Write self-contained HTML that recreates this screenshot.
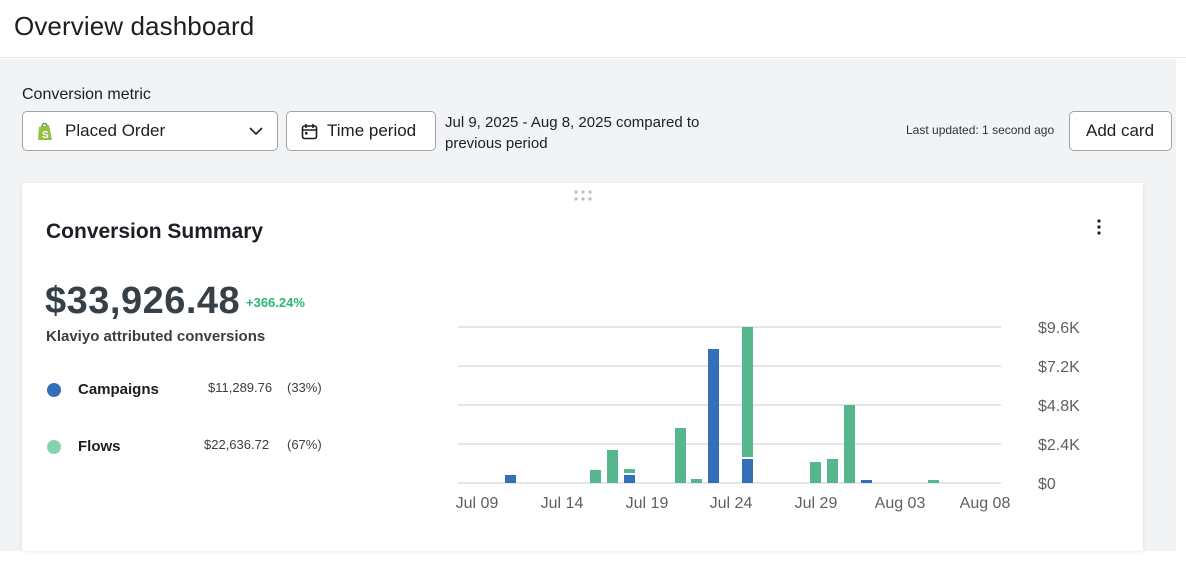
<!DOCTYPE html>
<html><head><meta charset="utf-8"><style>
*{box-sizing:border-box;margin:0;padding:0}
body{width:1186px;height:570px;background:#fff;font-family:"Liberation Sans",sans-serif;color:#1b1f23;position:relative;overflow:hidden}
.hdr{position:absolute;left:0;top:0;width:1186px;height:58px;background:#fff;border-bottom:1px solid #e6e7e9}
.hdr h1{position:absolute;left:14px;top:11px;font-size:26px;font-weight:400;color:#1b1f23;letter-spacing:0.1px}
.gray{position:absolute;left:0;top:59px;width:1176px;height:492px;background:#f2f3f4}
.lbl{position:absolute;left:22px;top:86px;font-size:16px;color:#1b1f23}
.btn{position:absolute;background:#fff;border:1px solid #9fa4a9;border-radius:5px;font-size:17px;color:#1b1f23}
.card{position:absolute;left:22px;top:183px;width:1121px;height:368px;background:#fff;box-shadow:0 1px 4px rgba(0,0,0,.08)}
.t{position:absolute;white-space:nowrap}
</style></head><body>
<div class="hdr"><h1>Overview dashboard</h1></div>
<div class="gray"></div>
<div class="lbl">Conversion metric</div>
<div class="btn" style="left:22px;top:111px;width:256px;height:40px">
 <svg style="position:absolute;left:14px;top:10px" width="16" height="19" viewBox="0 0 16 19"><path d="M2 5 L12 3 L15 18 L1 18 Z" fill="#95bf47"/><path d="M5 5 C5 1 9 0 10 4" stroke="#5e8e3e" stroke-width="1.3" fill="none"/><text x="5" y="16" font-size="10" font-weight="bold" fill="#fff" font-family="Liberation Sans">S</text></svg>
 <span class="t" style="left:42px;top:9px">Placed Order</span>
 <svg style="position:absolute;left:226px;top:14px" width="14" height="10" viewBox="0 0 14 10"><path d="M1 2 L7 8 L13 2" stroke="#1b1f23" stroke-width="1.6" fill="none"/></svg>
</div>
<div class="btn" style="left:286px;top:111px;width:150px;height:40px">
 <svg style="position:absolute;left:14px;top:11px" width="17" height="17" viewBox="0 0 17 17"><rect x="1.5" y="3" width="14" height="12.5" rx="2" stroke="#1b1f23" stroke-width="1.6" fill="none"/><path d="M5 1v4M12 1v4M1.5 7h14" stroke="#1b1f23" stroke-width="1.6"/><rect x="4" y="9" width="2.5" height="2.5" fill="#1b1f23"/></svg>
 <span class="t" style="left:40px;top:9px">Time period</span>
</div>
<div class="t" style="left:445px;top:112px;font-size:15px;line-height:21px">Jul 9, 2025 - Aug 8, 2025 compared to<br>previous period</div>
<div class="t" style="left:906px;top:123px;font-size:12px;color:#2d3338">Last updated: 1 second ago</div>
<div class="btn" style="left:1069px;top:111px;width:103px;height:40px"><span class="t" style="left:16px;top:9px">Add card</span></div>

<div class="card">
 <svg style="position:absolute;left:552px;top:7px" width="18" height="12"><g fill="#b9bdc1"><circle cx="2" cy="2" r="1.6"/><circle cx="9" cy="2" r="1.6"/><circle cx="16" cy="2" r="1.6"/><circle cx="2" cy="9" r="1.6"/><circle cx="9" cy="9" r="1.6"/><circle cx="16" cy="9" r="1.6"/></g></svg>
 <svg style="position:absolute;left:1074px;top:36px" width="6" height="16"><g fill="#1b1f23"><circle cx="3" cy="2" r="1.6"/><circle cx="3" cy="8" r="1.6"/><circle cx="3" cy="14" r="1.6"/></g></svg>
 <div class="t" style="left:24px;top:37px;font-size:21px;font-weight:700;color:#1b1f23">Conversion Summary</div>
 <div class="t" style="left:23px;top:97px;font-size:38px;font-weight:700;color:#373f47;letter-spacing:0.5px">$33,926.48</div>
 <div class="t" style="left:224px;top:112px;font-size:13px;font-weight:700;color:#2bb673">+366.24%</div>
 <div class="t" style="left:24px;top:145px;font-size:15px;font-weight:700;color:#373f47">Klaviyo attributed conversions</div>
 <div style="position:absolute;left:25px;top:200px;width:14px;height:14px;border-radius:50%;background:#3470b8"></div>
 <div class="t" style="left:56px;top:198px;font-size:15px;font-weight:700">Campaigns</div>
 <div class="t" style="left:186px;top:197px;font-size:13px;color:#373f47">$11,289.76</div>
 <div class="t" style="left:265px;top:197px;font-size:13px;color:#373f47">(33%)</div>
 <div style="position:absolute;left:25px;top:257px;width:14px;height:14px;border-radius:50%;background:#86d1b0"></div>
 <div class="t" style="left:56px;top:255px;font-size:15px;font-weight:700">Flows</div>
 <div class="t" style="left:182px;top:254px;font-size:13px;color:#373f47">$22,636.72</div>
 <div class="t" style="left:265px;top:254px;font-size:13px;color:#373f47">(67%)</div>
</div>

<svg style="position:absolute;left:0;top:0" width="1186" height="570">
 <g stroke="#d6d8db" stroke-width="1.2">
  <line x1="458" y1="327" x2="1001" y2="327"/><line x1="458" y1="366" x2="1001" y2="366"/>
  <line x1="458" y1="405" x2="1001" y2="405"/><line x1="458" y1="444" x2="1001" y2="444"/>
  <line x1="458" y1="483" x2="1001" y2="483"/>
 </g>
 <g fill="#3470b8">
  <rect x="505" y="475" width="11" height="8"/><rect x="624" y="475" width="11" height="8"/>
  <rect x="708" y="349" width="11" height="134"/><rect x="742" y="459" width="11" height="24"/>
  <rect x="861" y="480" width="11" height="3"/>
 </g>
 <g fill="#56b68e">
  <rect x="590" y="470" width="11" height="13"/><rect x="607" y="450" width="11" height="33"/>
  <rect x="624" y="469" width="11" height="4"/><rect x="675" y="428" width="11" height="55"/>
  <rect x="691" y="479" width="11" height="4"/><rect x="742" y="327" width="11" height="130"/>
  <rect x="810" y="462" width="11" height="21"/><rect x="827" y="459" width="11" height="24"/>
  <rect x="844" y="405" width="11" height="78"/><rect x="928" y="480" width="11" height="3"/>
 </g>
 <g font-family="Liberation Sans" font-size="16" fill="#5c6166">
  <text x="1038" y="333">$9.6K</text><text x="1038" y="372">$7.2K</text><text x="1038" y="411">$4.8K</text>
  <text x="1038" y="450">$2.4K</text><text x="1038" y="489">$0</text>
  <g text-anchor="middle"><text x="477" y="508">Jul 09</text><text x="562" y="508">Jul 14</text><text x="647" y="508">Jul 19</text>
  <text x="731" y="508">Jul 24</text><text x="816" y="508">Jul 29</text><text x="900" y="508">Aug 03</text><text x="985" y="508">Aug 08</text></g>
 </g>
</svg>
</body></html>
